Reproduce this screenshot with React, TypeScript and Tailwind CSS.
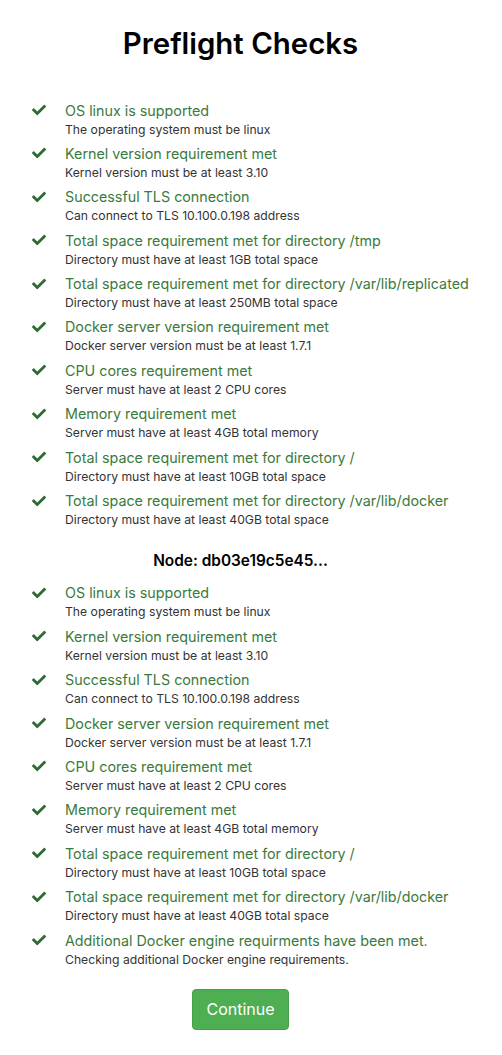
import { FaCheck } from 'react-icons/fa';

type Check = { title: string; message: string };

const hostChecks: Check[] = [
  { title: 'OS linux is supported', message: 'The operating system must be linux' },
  { title: 'Kernel version requirement met', message: 'Kernel version must be at least 3.10' },
  { title: 'Successful TLS connection', message: 'Can connect to TLS 10.100.0.198 address' },
  { title: 'Total space requirement met for directory /tmp', message: 'Directory must have at least 1GB total space' },
  { title: 'Total space requirement met for directory /var/lib/replicated', message: 'Directory must have at least 250MB total space' },
  { title: 'Docker server version requirement met', message: 'Docker server version must be at least 1.7.1' },
  { title: 'CPU cores requirement met', message: 'Server must have at least 2 CPU cores' },
  { title: 'Memory requirement met', message: 'Server must have at least 4GB total memory' },
  { title: 'Total space requirement met for directory /', message: 'Directory must have at least 10GB total space' },
  { title: 'Total space requirement met for directory /var/lib/docker', message: 'Directory must have at least 40GB total space' },
];

const nodeChecks: Check[] = [
  { title: 'OS linux is supported', message: 'The operating system must be linux' },
  { title: 'Kernel version requirement met', message: 'Kernel version must be at least 3.10' },
  { title: 'Successful TLS connection', message: 'Can connect to TLS 10.100.0.198 address' },
  { title: 'Docker server version requirement met', message: 'Docker server version must be at least 1.7.1' },
  { title: 'CPU cores requirement met', message: 'Server must have at least 2 CPU cores' },
  { title: 'Memory requirement met', message: 'Server must have at least 4GB total memory' },
  { title: 'Total space requirement met for directory /', message: 'Directory must have at least 10GB total space' },
  { title: 'Total space requirement met for directory /var/lib/docker', message: 'Directory must have at least 40GB total space' },
  { title: 'Additional Docker engine requirments have been met.', message: 'Checking additional Docker engine requirements.' },
];

const CheckList = ({ checks }: { checks: Check[] }) => (
  <ul className="pl-[32px] text-left">
    {checks.map((check, i) => (
      <li key={i} className="flex h-[43.4px]">
        <div className="w-[33px] h-[19px] flex items-center">
          <FaCheck className="w-[14px] h-[14px] text-[#2e6b33]" />
        </div>
        <div>
          <div className="text-[14.3px] leading-[19px] text-[#3a7a3c] whitespace-nowrap">{check.title}</div>
          <div className="text-[12.2px] leading-[19px] text-[#333]">{check.message}</div>
        </div>
      </li>
    ))}
  </ul>
);

const App = () => {
  return (
    <div className="w-[481px] pt-[26px] pb-[26px] text-center bg-white" style={{ fontFamily: 'Inter, "Liberation Sans", Arial, sans-serif' }}>
      <h1 className="text-[29.4px] leading-[36px] font-semibold text-black mb-[38.5px]">Preflight Checks</h1>
      <CheckList checks={hostChecks} />
      <h2 className="mt-[18px] mb-[13px] text-[15.4px] leading-[18px] font-semibold text-black">Node: db03e19c5e45...</h2>
      <CheckList checks={nodeChecks} />
      <button className="mt-[15px] h-[41px] px-[13px] rounded-[4px] bg-[#4eae52] border border-[#46a04a] text-white text-[16px]">
        Continue
      </button>
    </div>
  );
};

export default App;
